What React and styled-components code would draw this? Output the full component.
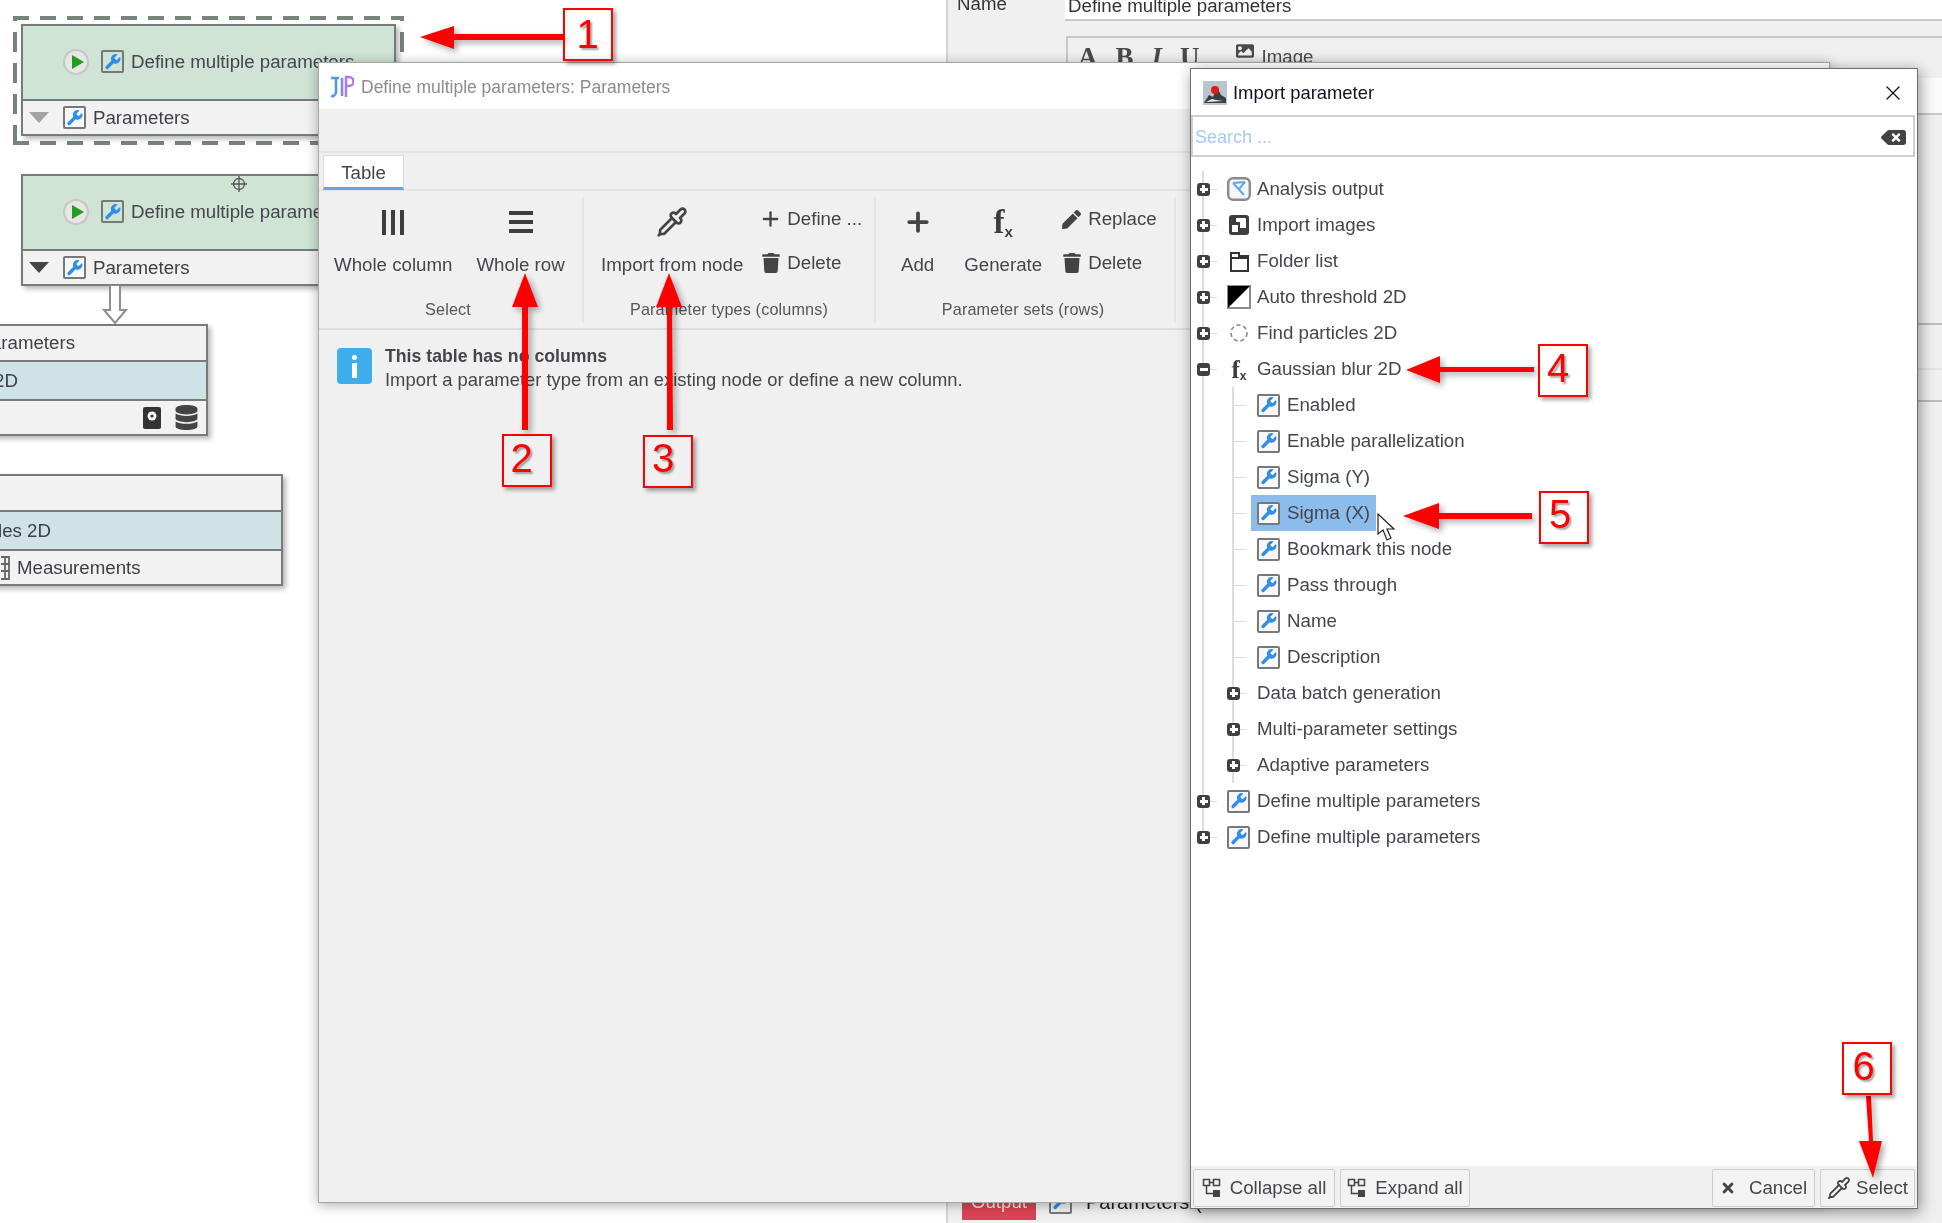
import styled, { createGlobalStyle } from 'styled-components';
import { Pipette, Plus, X } from 'lucide-react';
import { FaTrash, FaPen, FaDatabase, FaBackspace, FaTimes, FaImage } from 'react-icons/fa';

const GlobalStyle = createGlobalStyle`
  html, body {
    margin: 0;
    padding: 0;
    background: #fff;
  }
  body {
    font-family: "Liberation Sans", Arial, sans-serif;
    font-size: 18.7px;
    color: #45454d;
  }
`;

const Page = styled.div`
  position: relative;
  width: 1942px;
  height: 1223px;
  overflow: hidden;
  display: flex;
  filter: blur(0.4px);
`;

/* ---------- node canvas ---------- */

const Canvas = styled.div`
  position: relative;
  width: 946px;
  flex: none;
  background: #fff;
`;

const dash = '#76857b';

const Selection = styled.div`
  position: absolute;
  left: 13px;
  top: 16px;
  width: 391px;
  height: 129px;
  background-image: repeating-linear-gradient(90deg, ${dash} 0 16px, transparent 16px 27px),
    repeating-linear-gradient(90deg, ${dash} 0 16px, transparent 16px 27px),
    repeating-linear-gradient(0deg, ${dash} 0 20px, transparent 20px 31px),
    repeating-linear-gradient(0deg, ${dash} 0 20px, transparent 20px 31px);
  background-size: 100% 4px, 100% 4px, 4px 100%, 4px 100%;
  background-position: 0 0, 0 100%, 0 0, 100% 0;
  background-repeat: no-repeat;
`;

const Node = styled.div`
  position: absolute;
  left: ${(p) => p.$x}px;
  top: ${(p) => p.$y}px;
  width: ${(p) => p.$w}px;
  box-sizing: border-box;
  border: 2px solid #757c79;
  background: #f2f2f2;
  box-shadow: 3px 3px 5px rgba(0, 0, 0, 0.28);
`;

const NodeHead = styled.div`
  height: 71px;
  padding-bottom: 2px;
  background: #cfe4d4;
  border-bottom: 2px solid #757c79;
  display: flex;
  align-items: center;
  padding-left: 40px;
  gap: 6px;
  white-space: nowrap;
  position: relative;
`;

const NodeRow = styled.div`
  height: ${(p) => p.$h || 33}px;
  display: flex;
  align-items: center;
  justify-content: ${(p) => (p.$end ? 'flex-end' : 'flex-start')};
  padding: 0 ${(p) => p.$pr || 0}px 0 ${(p) => p.$pl || 0}px;
  gap: ${(p) => p.$gap || 6}px;
  background: ${(p) => (p.$tint ? '#cfe2e6' : 'transparent')};
  border-top: ${(p) => (p.$line ? '2px solid #757c79' : 'none')};
  white-space: nowrap;
  color: #3f3f47;
`;

const Play = styled.span`
  width: 22px;
  height: 22px;
  border-radius: 50%;
  background: #e6e6e6;
  border: 2px solid #c6c6c6;
  margin-right: 6px;
  display: flex;
  align-items: center;
  justify-content: center;
  flex: none;
  &::after {
    content: '';
    border-left: 12px solid #1ea01e;
    border-top: 7px solid transparent;
    border-bottom: 7px solid transparent;
    margin-left: 3px;
  }
`;

const Caret = styled.span`
  width: 0;
  height: 0;
  border-left: 10px solid transparent;
  border-right: 10px solid transparent;
  border-top: 11px solid ${(p) => (p.$dim ? '#a3a3a3' : '#454545')};
  margin-right: 8px;
`;

const Crosshair = styled.svg`
  position: absolute;
  left: 208px;
  top: 0;
  width: 16px;
  height: 16px;
`;

const Connector = styled.svg`
  position: absolute;
  left: 102px;
  top: 285px;
`;

/* ---------- icons ---------- */

const ToolBox = styled.span`
  width: 23px;
  height: 23px;
  box-sizing: border-box;
  border: 2px solid #787878;
  border-radius: 2px;
  margin-right: 1px;
  background: ${(p) => (p.$clear ? 'transparent' : '#f7f7f7')};
  display: flex;
  align-items: center;
  justify-content: center;
  flex: none;
`;

const WRENCH =
  'M14.7 6.3a1 1 0 0 0 0 1.4l1.6 1.6a1 1 0 0 0 1.4 0l3.77-3.77a6 6 0 0 1-7.94 7.94l-6.91 6.91a2.12 2.12 0 0 1-3-3l6.91-6.91a6 6 0 0 1 7.94-7.94l-3.76 3.76z';

const ToolIcon = ({ clear }) => (
  <ToolBox $clear={clear}>
    <svg width="20" height="20" viewBox="0 0 24 24">
      <path d={WRENCH} fill="#2f8fe8" />
    </svg>
  </ToolBox>
);

const FxMark = styled.span`
  width: 24px;
  flex: none;
  display: flex;
  align-items: flex-end;
  justify-content: center;
  font-family: "Liberation Serif", serif;
  font-weight: 700;
  font-size: ${(p) => p.$size || 25}px;
  line-height: 1;
  color: #3d3d3d;
  & small {
    font-family: "Liberation Sans", sans-serif;
    font-size: ${(p) => (p.$size ? 15 : 12)}px;
    line-height: 1;
  }
`;

const AnalysisIcon = () => (
  <svg width="24" height="24" viewBox="0 0 24 24">
    <rect x="1.2" y="1.2" width="21.6" height="21.6" rx="5" fill="#f5f5f5" stroke="#8a8a8a" strokeWidth="2.4" />
    <path d="M6 6 L18 5 M6 6 L17 18 M18 5 L12 12" fill="none" stroke="#63a7ee" strokeWidth="2" />
  </svg>
);

const ImagesIcon = () => (
  <svg width="24" height="24" viewBox="0 0 24 24">
    <rect x="2" y="2" width="20" height="20" rx="3" fill="#3d3d3d" />
    <path d="M9 5h9a2 2 0 0 1 1 1v9h-6v-6H9z" fill="#fff" />
    <rect x="5" y="12" width="6" height="7" fill="#fff" />
  </svg>
);

const FolderIcon = () => (
  <svg width="24" height="24" viewBox="0 0 24 24">
    <path d="M4 22V4h8v3h9v15z" fill="#fff" stroke="#333" strokeWidth="2" />
    <path d="M4 9h17" stroke="#333" strokeWidth="2" />
  </svg>
);

const ThresholdIcon = () => (
  <svg width="24" height="24" viewBox="0 0 24 24">
    <rect x="1" y="1" width="22" height="22" fill="#fff" stroke="#8c8c8c" strokeWidth="2" />
    <path d="M1 1h22L1 23z" fill="#000" />
  </svg>
);

const ParticlesIcon = () => (
  <svg width="24" height="24" viewBox="0 0 24 24">
    <circle cx="12" cy="12" r="8" fill="none" stroke="#8a8a8a" strokeWidth="1.6" strokeDasharray="4 3" />
  </svg>
);

const TreeGlyph = () => (
  <svg width="20" height="20" viewBox="0 0 20 20">
    <rect x="1.5" y="1.5" width="6" height="6" fill="none" stroke="#444" strokeWidth="1.5" />
    <rect x="11.5" y="1.5" width="6" height="6" fill="none" stroke="#444" strokeWidth="1.5" />
    <rect x="11" y="12" width="7" height="7" fill="#444" />
    <path d="M7.5 4.5h4M4.5 7.5v8H11" fill="none" stroke="#444" strokeWidth="1.5" />
  </svg>
);

const ImportLogo = () => (
  <svg width="24" height="24" viewBox="0 0 24 24">
    <rect width="24" height="24" fill="#b9c4cc" />
    <path d="M1 22 L6 14 L10 16 L14 6 L18 14 L23 17 V22z" fill="#3a3f44" />
    <path d="M3 21 L9 18 L13 19 L20 20z" fill="#eef0f2" />
    <circle cx="12" cy="9" r="4" fill="#e01818" />
  </svg>
);

const PipelineLogo = () => (
  <svg width="24" height="24" viewBox="0 0 24 24">
    <path d="M1 3h8M6 3v14a4 4 0 0 1-5 4" fill="none" stroke="#4a9be8" strokeWidth="2.6" />
    <path d="M12 3v18" fill="none" stroke="#7d8ce8" strokeWidth="2.6" />
    <path d="M16 22V2h3a4 4 0 0 1 0 9h-3" fill="none" stroke="#b57ae8" strokeWidth="2.6" />
  </svg>
);

/* ---------- inspector behind the windows ---------- */

const Sidebar = styled.div`
  flex: 1;
  background: #f0f0f0;
  border-left: 2px solid #d4d4d4;
  display: flex;
  flex-direction: column;
  box-sizing: border-box;
  height: 1223px;
  overflow: hidden;
`;

const NameRow = styled.div`
  height: 21px;
  display: flex;
  align-items: flex-end;
  overflow: hidden;
  padding-left: 9px;
  line-height: 17px;
  color: #333;
`;

const NameLabel = styled.span`
  width: 108px;
  flex: none;
  margin-bottom: 9px;
`;

const NameInput = styled.div`
  flex: 1;
  height: 21px;
  background: #fff;
  border-bottom: 2px solid #c8c8c8;
  line-height: 12px;
  padding-left: 3px;
  box-sizing: border-box;
`;

const EditorBar = styled.div`
  margin: 15px 0 0 118px;
  height: 42px;
  border-top: 2px solid #c8c8c8;
  border-left: 2px solid #c8c8c8;
  box-sizing: border-box;
  display: flex;
  align-items: flex-start;
  padding: 4px 0 0 10px;
  gap: 18px;
  font-family: "Liberation Serif", serif;
  font-size: 27px;
  line-height: 30px;
  font-weight: 700;
  color: #4a4a4a;
`;

const EditorImage = styled.span`
  font-family: "Liberation Sans", sans-serif;
  font-size: 18.7px;
  font-weight: 400;
  display: flex;
  gap: 8px;
  margin-left: 18px;
`;

const Band = styled.div`
  height: ${(p) => p.$h}px;
  background: ${(p) => p.$bg || 'transparent'};
  border-bottom: 2px solid ${(p) => p.$line || '#c8c8c8'};
  box-sizing: border-box;
`;

const OutputRow = styled.div`
  margin-top: auto;
  height: 36px;
  margin-bottom: 3px;
  display: flex;
  align-items: center;
  padding-left: 14px;
  gap: 13px;
  color: #222;
  font-size: 20px;
  white-space: nowrap;
`;

const OutputTag = styled.span`
  width: 74px;
  height: 36px;
  background: #dc4355;
  color: #fbe4e6;
  font-size: 18.7px;
  text-align: center;
  line-height: 36px;
`;

/* ---------- parameter window ---------- */

const Window = styled.div`
  position: absolute;
  left: 318px;
  top: 62px;
  width: 1512px;
  height: 1141px;
  box-sizing: border-box;
  border: 1px solid #a6a6a6;
  background: #f0f0f0;
  box-shadow: 0 2px 12px rgba(0, 0, 0, 0.32);
`;

const WindowTitle = styled.div`
  height: 46px;
  box-sizing: border-box;
  padding: 2px 0 0 11px;
  background: #fff;
  display: flex;
  align-items: center;
  gap: 7px;
  font-size: 17.5px;
  color: #8c8c8c;
`;

const TabStrip = styled.div`
  height: 82px;
  box-sizing: border-box;
  padding: 46px 0 0 4px;
  border-bottom: 2px solid #e4e4e4;
  background: linear-gradient(#e4e4e4, #e4e4e4) 0 42px / 100% 2px no-repeat;
`;

const Tab = styled.div`
  width: 81px;
  height: 35px;
  box-sizing: border-box;
  background: #fff;
  border: 1px solid #dcdcdc;
  border-bottom: 3px solid #6ba3e3;
  line-height: 33px;
  text-align: center;
`;

const Ribbon = styled.div`
  display: flex;
  height: 139px;
  box-sizing: border-box;
  padding-top: 6px;
  border-bottom: 2px solid #dedede;
`;

const Group = styled.div`
  width: ${(p) => p.$w}px;
  height: 126px;
  box-sizing: border-box;
  border-right: 2px solid #e4e4e4;
  padding-left: ${(p) => p.$pl}px;
  display: flex;
  flex-direction: column;
`;

const GroupBody = styled.div`
  display: flex;
  gap: ${(p) => p.$gap}px;
  height: 93px;
`;

const GroupLabel = styled.div`
  margin-left: ${(p) => -p.$pl}px;
  padding-top: 6px;
  padding-right: ${(p) => p.$pr || 0}px;
  line-height: 26px;
  font-size: 16.2px;
  letter-spacing: 0.15px;
  text-align: center;
  color: #55555c;
`;

const BigButton = styled.div`
  display: flex;
  flex-direction: column;
  align-items: center;
  padding-top: 7px;
  white-space: nowrap;
`;

const BigIcon = styled.div`
  height: 36px;
  display: flex;
  align-items: center;
  justify-content: center;
  color: #444;
`;

const BigText = styled.div`
  line-height: 50px;
`;

const SmallStack = styled.div`
  display: flex;
  flex-direction: column;
  margin-left: ${(p) => p.$ml || 0}px;
`;

const SmallButton = styled.div`
  height: 44px;
  display: flex;
  align-items: center;
  gap: 5px;
  color: #444;
  white-space: nowrap;
`;

const SmallGlyph = styled.span`
  width: 23px;
  display: flex;
  justify-content: center;
`;

const BarsIcon = styled.span`
  display: flex;
  flex-direction: ${(p) => (p.$row ? 'column' : 'row')};
  gap: ${(p) => (p.$row ? 5 : 4.5)}px;
  & i {
    display: block;
    background: #3e3e3e;
    width: ${(p) => (p.$row ? 24 : 4.5)}px;
    height: ${(p) => (p.$row ? 4 : 25)}px;
  }
`;

const Notice = styled.div`
  display: flex;
  gap: 13px;
  padding: 18px 0 0 18px;
`;

const InfoBadge = styled.div`
  width: 35px;
  height: 36px;
  border-radius: 4px;
  background: #3daeea;
  display: flex;
  flex-direction: column;
  align-items: center;
  justify-content: center;
  gap: 3px;
  flex: none;
  &::before {
    content: '';
    width: 5px;
    height: 5px;
    background: #fff;
    border-radius: 50%;
  }
  &::after {
    content: '';
    width: 5px;
    height: 15px;
    background: #fff;
  }
`;

const NoticeText = styled.div`
  margin-top: -4px;
  line-height: 24px;
  font-size: 18.4px;
  & b {
    display: block;
    font-size: 17.7px;
  }
`;

/* ---------- import dialog ---------- */

const Dialog = styled.div`
  position: absolute;
  left: 1190px;
  top: 68px;
  width: 728px;
  height: 1141px;
  box-sizing: border-box;
  border: 1.5px solid #6e6e6e;
  background: #fff;
  box-shadow: 2px 3px 14px rgba(0, 0, 0, 0.42);
  display: flex;
  flex-direction: column;
`;

const DialogTitle = styled.div`
  height: 46px;
  flex: none;
  box-sizing: border-box;
  display: flex;
  align-items: center;
  padding: 2px 12px 0 12px;
  gap: 6px;
  color: #101024;
  font-size: 18.4px;
`;

const CloseGlyph = styled.span`
  margin-left: auto;
  display: flex;
  color: #111;
`;

const SearchBox = styled.div`
  height: 42px;
  flex: none;
  margin-right: 2px;
  box-sizing: border-box;
  border: 2px solid #cfcfcf;
  display: flex;
  align-items: center;
  justify-content: space-between;
  padding: 2px 7px 0 2px;
  font-size: 18px;
  color: #a9c9f5;
`;

const Tree = styled.div`
  flex: 1;
  padding-top: 14px;
`;

const guide = '#dcdcdc';

const Row = styled.div`
  height: 36px;
  display: flex;
  align-items: center;
  padding-left: ${(p) => p.$pad}px;
  box-sizing: border-box;
  white-space: nowrap;
  background-image: linear-gradient(${guide}, ${guide}), linear-gradient(${guide}, ${guide}),
    linear-gradient(${guide}, ${guide});
  background-repeat: no-repeat;
  background-size: 2px ${(p) => (p.$last ? '50%' : '100%')}, 2px 100%, 14px 1px;
  background-position: 11px 0, ${(p) => (p.$deep ? '41px 0' : '-4px 0')},
    ${(p) => (p.$deep ? '41px' : '12px')} 50%;
`;

const Expander = styled.span`
  width: 13px;
  height: 13px;
  flex: none;
  border-radius: 3px;
  background-color: #404040;
  background-image: linear-gradient(#fff, #fff)
    ${(p) => (p.$open ? '' : ', linear-gradient(#fff, #fff)')};
  background-repeat: no-repeat;
  background-position: center;
  background-size: 8px 3px ${(p) => (p.$open ? '' : ', 3px 8px')};
  margin-right: 11px;
`;

const RowLabel = styled.span`
  display: flex;
  align-items: center;
  height: 100%;
  gap: 6px;
  padding: 0 6px;
  background: ${(p) => (p.$selected ? '#8cbcec' : 'transparent')};
`;

const Footer = styled.div`
  height: 42px;
  flex: none;
  box-sizing: border-box;
  background: #f0f0f0;
  display: flex;
  align-items: center;
  padding: 1px 2px 0 2px;
  gap: 5px;
`;

const FooterButton = styled.div`
  height: 38px;
  box-sizing: border-box;
  border: 1.5px solid #cdcdcd;
  border-radius: 2px;
  background: #f3f3f3;
  display: flex;
  align-items: center;
  justify-content: center;
  gap: ${(p) => p.$gap || 8}px;
  width: ${(p) => p.$w}px;
  margin-left: ${(p) => (p.$push ? 'auto' : '0')};
  white-space: nowrap;
`;

const Pointer = styled.svg`
  position: absolute;
  left: 1377px;
  top: 513px;
`;

/* ---------- red annotations ---------- */

const Overlay = styled.svg`
  position: absolute;
  inset: 0;
  width: 1942px;
  height: 1223px;
  filter: drop-shadow(3px 3px 3px rgba(0, 0, 0, 0.35));
`;

const Callout = styled.div`
  position: absolute;
  left: ${(p) => p.$x}px;
  top: ${(p) => p.$y}px;
  width: 50px;
  height: 53px;
  box-sizing: border-box;
  border: 2.5px solid #f00;
  box-shadow: 3px 3px 4px rgba(0, 0, 0, 0.35);
  color: #f00;
  font-size: 40px;
  line-height: ${(p) => p.$lh}px;
  padding-right: ${(p) => p.$pr}px;
  text-align: center;
  text-shadow: 2px 2px 2px rgba(0, 0, 0, 0.35);
`;

const callouts = [
  { n: 1, x: 563, y: 8, pr: 1, lh: 48 },
  { n: 2, x: 502, y: 434, pr: 11, lh: 44 },
  { n: 3, x: 643, y: 435, pr: 10, lh: 43 },
  { n: 4, x: 1538, y: 344, pr: 10, lh: 44 },
  { n: 5, x: 1539, y: 491, pr: 8, lh: 42 },
  { n: 6, x: 1842, y: 1042, pr: 7, lh: 44 },
];

const arrows = [
  'M563 34 L454 34 L454 26 L420 37 L454 49 L454 40 L563 40 Z',
  'M522 430 L522 307 L512 307 L525 273 L538 307 L528 307 L528 430 Z',
  'M667 430 L667 307 L656 307 L669 273 L682 307 L672 307 L673 430 Z',
  'M1534 367 L1440 367 L1440 356 L1406 370 L1440 383 L1440 372 L1534 372 Z',
  'M1532 513 L1439 513 L1439 503 L1403 516 L1439 529 L1439 519 L1532 519 Z',
  'M1866 1096 L1869 1141 L1859 1141 L1873 1178 L1882 1141 L1873 1141 L1871 1096 Z',
];

const treeRows = [
  { label: 'Analysis output', icon: <AnalysisIcon />, expand: true },
  { label: 'Import images', icon: <ImagesIcon />, expand: true },
  { label: 'Folder list', icon: <FolderIcon />, expand: true },
  { label: 'Auto threshold 2D', icon: <ThresholdIcon />, expand: true },
  { label: 'Find particles 2D', icon: <ParticlesIcon />, expand: true },
  { label: 'Gaussian blur 2D', icon: <FxMark>f<small>x</small></FxMark>, expand: true, open: true },
  { label: 'Enabled', child: true },
  { label: 'Enable parallelization', child: true },
  { label: 'Sigma (Y)', child: true },
  { label: 'Sigma (X)', child: true, selected: true },
  { label: 'Bookmark this node', child: true },
  { label: 'Pass through', child: true },
  { label: 'Name', child: true },
  { label: 'Description', child: true },
  { label: 'Data batch generation', sub: true },
  { label: 'Multi-parameter settings', sub: true },
  { label: 'Adaptive parameters', sub: true },
  { label: 'Define multiple parameters', icon: <ToolIcon />, expand: true },
  { label: 'Define multiple parameters', icon: <ToolIcon />, expand: true, last: true },
];

const TreeRow = ({ row }) => {
  if (row.child) {
    return (
      <Row $pad={60} $deep>
        <RowLabel $selected={row.selected}>
          <ToolIcon />
          {row.label}
        </RowLabel>
      </Row>
    );
  }
  if (row.sub) {
    return (
      <Row $pad={36} $deep>
        <Expander />
        <RowLabel>{row.label}</RowLabel>
      </Row>
    );
  }
  return (
    <Row $pad={6} $last={row.last}>
      <Expander $open={row.open} />
      <RowLabel>
        {row.icon}
        {row.label}
      </RowLabel>
    </Row>
  );
};

const App = () => (
  <>
    <GlobalStyle />
    <Page>
      <Canvas>
        <Selection />
        <Node $x={21} $y={24} $w={375}>
          <NodeHead>
            <Play />
            <ToolIcon clear />
            Define multiple parameters
          </NodeHead>
          <NodeRow $pl={6}>
            <Caret $dim />
            <ToolIcon />
            Parameters
          </NodeRow>
        </Node>
        <Node $x={21} $y={174} $w={375}>
          <NodeHead>
            <Crosshair viewBox="0 0 16 16">
              <circle cx="8" cy="8" r="5.5" fill="none" stroke="#555" strokeWidth="1.3" />
              <path d="M8 0v16M0 8h16" stroke="#555" strokeWidth="1.3" />
            </Crosshair>
            <Play />
            <ToolIcon clear />
            Define multiple parameters
          </NodeHead>
          <NodeRow $pl={6}>
            <Caret />
            <ToolIcon />
            Parameters
          </NodeRow>
        </Node>
        <Connector width="26" height="40" viewBox="0 0 26 40">
          <path d="M8 0V25H2L13 38L24 25H18V0Z" fill="#fff" stroke="#8f8f8f" strokeWidth="2" />
        </Connector>
        <Node $x={-60} $y={324} $w={268}>
          <NodeRow $end $pr={131} $h={34}>Parameters</NodeRow>
          <NodeRow $end $pr={188} $tint $line $h={37}>2D</NodeRow>
          <NodeRow $end $pr={7} $gap={12} $line>
            <svg width="19" height="22" viewBox="0 0 19 22">
              <rect width="18" height="22" rx="2" fill="#333" />
              <circle cx="9" cy="9" r="4.5" fill="#fff" />
              <circle cx="9" cy="9" r="1.6" fill="#333" />
            </svg>
            <FaDatabase size={25} color="#444" />
          </NodeRow>
        </Node>
        <Node $x={-60} $y={474} $w={343}>
          <NodeRow $h={34} />
          <NodeRow $end $pr={230} $tint $line $h={37}>les 2D</NodeRow>
          <NodeRow $pl={59} $line $gap={7}>
            <svg width="9" height="24" viewBox="0 0 9 24">
              <path d="M0 1h8v22H0M0 8h8M0 15h8M4 1v22" fill="none" stroke="#666" strokeWidth="1.8" />
            </svg>
            Measurements
          </NodeRow>
        </Node>
      </Canvas>

      <Sidebar>
        <NameRow>
          <NameLabel>Name</NameLabel>
          <NameInput>Define multiple parameters</NameInput>
        </NameRow>
        <EditorBar>
          <span>A</span>
          <span>B</span>
          <span><i>I</i></span>
          <span><u>U</u></span>
          <EditorImage>
            <FaImage size={18} />
            Image
          </EditorImage>
        </EditorBar>
        <Band $h={37} $bg="#fbfbfb" />
        <Band $h={210} $line="#bcbcbc" />
        <Band $h={45} $line="#e4e4e4" />
        <Band $h={32} $line="#bcbcbc" />
        <OutputRow>
          <OutputTag>Output</OutputTag>
          <ToolIcon clear />
          Parameters (
        </OutputRow>
      </Sidebar>

      <Window>
        <WindowTitle>
          <PipelineLogo />
          Define multiple parameters: Parameters
        </WindowTitle>
        <TabStrip>
          <Tab>Table</Tab>
        </TabStrip>
        <Ribbon>
          <Group $w={265} $pl={15}>
            <GroupBody $gap={24}>
              <BigButton>
                <BigIcon>
                  <BarsIcon><i /><i /><i /></BarsIcon>
                </BigIcon>
                <BigText>Whole column</BigText>
              </BigButton>
              <BigButton>
                <BigIcon>
                  <BarsIcon $row><i /><i /><i /></BarsIcon>
                </BigIcon>
                <BigText>Whole row</BigText>
              </BigButton>
            </GroupBody>
            <GroupLabel $pl={15} $pr={5}>Select</GroupLabel>
          </Group>
          <Group $w={292} $pl={17}>
            <GroupBody $gap={16}>
              <BigButton>
                <BigIcon>
                  <Pipette size={32} strokeWidth={2} />
                </BigIcon>
                <BigText>Import from node</BigText>
              </BigButton>
              <SmallStack>
                <SmallButton>
                  <SmallGlyph><Plus size={30} strokeWidth={2.4} /></SmallGlyph>
                  Define ...
                </SmallButton>
                <SmallButton>
                  <SmallGlyph><FaTrash size={20} /></SmallGlyph>
                  Delete
                </SmallButton>
              </SmallStack>
            </GroupBody>
            <GroupLabel $pl={17}>Parameter types (columns)</GroupLabel>
          </Group>
          <Group $w={300} $pl={25}>
            <GroupBody $gap={30}>
              <BigButton>
                <BigIcon>
                  <Plus size={30} strokeWidth={3} />
                </BigIcon>
                <BigText>Add</BigText>
              </BigButton>
              <BigButton>
                <BigIcon>
                  <FxMark $size={33}>f<small>x</small></FxMark>
                </BigIcon>
                <BigText>Generate</BigText>
              </BigButton>
              <SmallStack $ml={-12}>
                <SmallButton>
                  <SmallGlyph><FaPen size={19} /></SmallGlyph>
                  Replace
                </SmallButton>
                <SmallButton>
                  <SmallGlyph><FaTrash size={20} /></SmallGlyph>
                  Delete
                </SmallButton>
              </SmallStack>
            </GroupBody>
            <GroupLabel $pl={29}>Parameter sets (rows)</GroupLabel>
          </Group>
        </Ribbon>
        <Notice>
          <InfoBadge />
          <NoticeText>
            <b>This table has no columns</b>
            Import a parameter type from an existing node or define a new column.
          </NoticeText>
        </Notice>
      </Window>

      <Dialog>
        <DialogTitle>
          <ImportLogo />
          Import parameter
          <CloseGlyph><X size={24} strokeWidth={1.2} /></CloseGlyph>
        </DialogTitle>
        <SearchBox>
          Search ...
          <FaBackspace size={25} color="#444" />
        </SearchBox>
        <Tree>
          {treeRows.map((row, i) => (
            <TreeRow key={i} row={row} />
          ))}
        </Tree>
        <Footer>
          <FooterButton $w={142}><TreeGlyph />Collapse all</FooterButton>
          <FooterButton $w={130}><TreeGlyph />Expand all</FooterButton>
          <FooterButton $w={103} $push $gap={13}><FaTimes size={16} color="#444" />Cancel</FooterButton>
          <FooterButton $w={95} $gap={5}><Pipette size={24} strokeWidth={1.8} color="#444" />Select</FooterButton>
        </Footer>
      </Dialog>

      <Pointer width="20" height="28" viewBox="0 0 20 28">
        <path d="M1 1V21L6 17L10 27L14 25L10 16H17Z" fill="#fff" stroke="#222" strokeWidth="1.2" />
      </Pointer>

      <Overlay viewBox="0 0 1942 1223">
        {arrows.map((d) => (
          <path key={d} d={d} fill="#f00" />
        ))}
      </Overlay>
      {callouts.map((c) => (
        <Callout key={c.n} $x={c.x} $y={c.y} $pr={c.pr} $lh={c.lh}>{c.n}</Callout>
      ))}
    </Page>
  </>
);

export default App;
